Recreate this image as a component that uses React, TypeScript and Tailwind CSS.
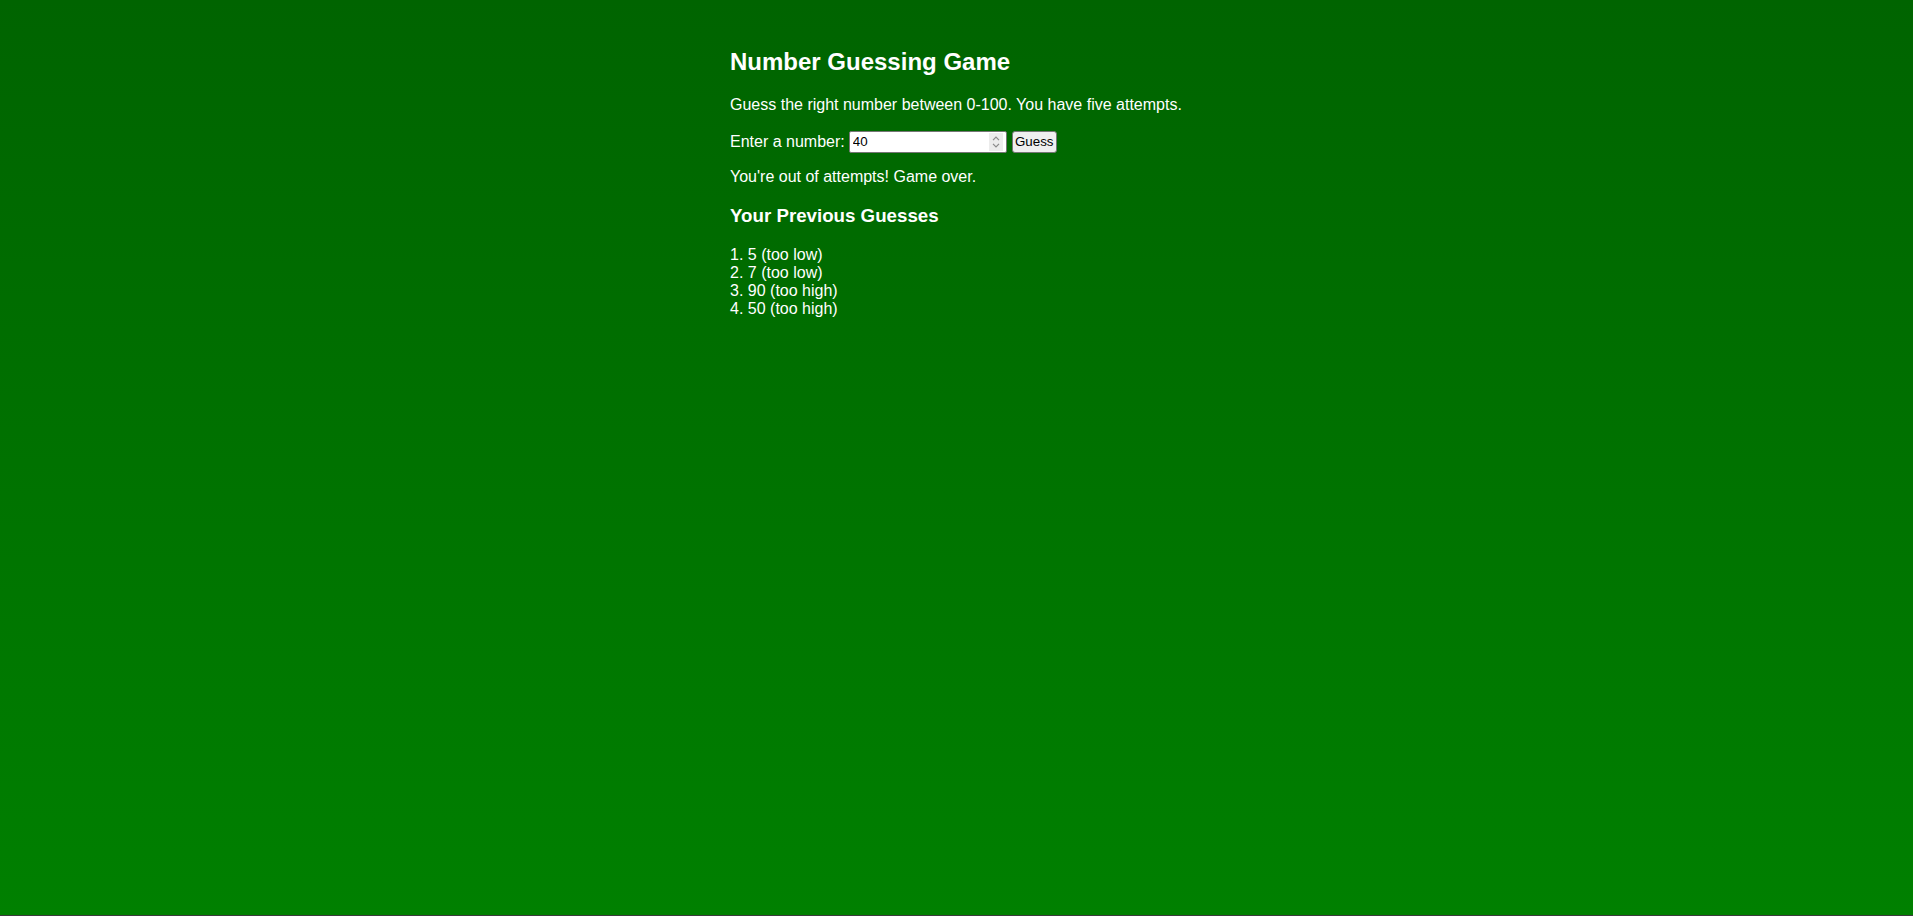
import { useState } from 'react';

export default function App() {
  const [value, setValue] = useState('40');

  const guesses = [
    { n: 5, hint: 'too low' },
    { n: 7, hint: 'too low' },
    { n: 90, hint: 'too high' },
    { n: 50, hint: 'too high' },
  ];

  return (
    <div className="h-[916px] bg-[#3b3b3b] font-['Liberation_Sans',Arial,sans-serif]">
      <div className="h-[915px] bg-gradient-to-b from-[#006400] to-[#008000] text-white">
        <div className="w-[453px] mx-auto pt-[48px]">
          <h2 className="text-[24px] font-bold leading-[1.15]">Number Guessing Game</h2>

          <p className="mt-[20px] text-[16px] leading-[1.15]">
            Guess the right number between 0-100. You have five attempts.
          </p>

          {/* Guess form */}
          <div className="mt-[17px] flex items-center h-[22px] text-[16px] leading-[1.15]">
            <label htmlFor="guess" className="mr-[4px]">Enter a number:</label>
            <div className="flex items-center w-[158px] h-[22px] bg-white border border-[#767676] rounded-[2px] pl-[3px] pr-[3px]">
              <input
                id="guess"
                type="text"
                value={value}
                onChange={(e) => setValue(e.target.value)}
                className="flex-1 min-w-0 bg-transparent text-black text-[13.33px] leading-none outline-none"
              />
              <div className="w-[14px] h-[18px] bg-[#ececec] flex flex-col items-center justify-center gap-[2px]">
                <svg width="8" height="5" viewBox="0 0 8 5" fill="none" stroke="#8a8a8a" strokeWidth="1.2">
                  <path d="M1 4.2L4 1.2L7 4.2" />
                </svg>
                <svg width="8" height="5" viewBox="0 0 8 5" fill="none" stroke="#8a8a8a" strokeWidth="1.2">
                  <path d="M1 0.8L4 3.8L7 0.8" />
                </svg>
              </div>
            </div>
            <button className="ml-[5px] w-[45px] h-[22px] bg-[#efefef] border border-[#767676] rounded-[3px] text-black text-[13.33px] leading-none">
              Guess
            </button>
          </div>

          <p className="mt-[15px] text-[16px] leading-[1.15]">You're out of attempts! Game over.</p>

          <h3 className="mt-[18.72px] text-[18.72px] font-bold leading-[1.15]">Your Previous Guesses</h3>

          {/* Guess history */}
          <div className="mt-[19px] text-[16px] leading-[1.13]">
            {guesses.map((g, i) => (
              <div key={i}>
                {i + 1}. {g.n} ({g.hint})
              </div>
            ))}
          </div>
        </div>
      </div>
    </div>
  );
}
